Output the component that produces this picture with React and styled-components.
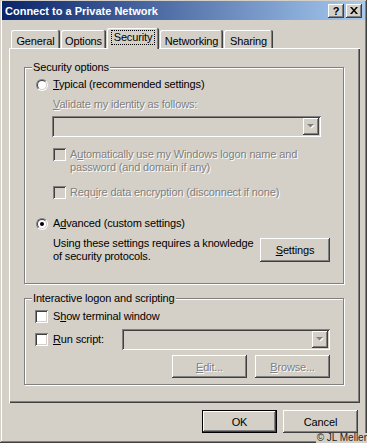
import React from 'react';
import styled, { createGlobalStyle, css } from 'styled-components';

const FACE = '#d4d0c8';
const SHADOW = '#808080';
const DARK = '#404040';
const HILITE = '#ffffff';

const GlobalStyle = createGlobalStyle`
  html, body {
    margin: 0;
    padding: 0;
    background: ${FACE};
  }
  body {
    font-family: "Liberation Sans", Arial, sans-serif;
    font-size: 11px;
    letter-spacing: -0.15px;
    color: #000;
  }
`;

const raised = css`
  box-shadow: inset -1px -1px ${DARK}, inset 1px 1px ${HILITE},
    inset -2px -2px ${SHADOW}, inset 2px 2px ${FACE};
`;

const sunken = css`
  box-shadow: inset 1px 1px ${SHADOW}, inset -1px -1px ${HILITE},
    inset 2px 2px ${DARK}, inset -2px -2px ${FACE};
`;

const disabledText = css`
  color: ${SHADOW};
  text-shadow: 1px 1px 0 ${HILITE};
`;

const Window = styled.div`
  position: relative;
  width: 367px;
  height: 443px;
  box-sizing: border-box;
  padding: 1px 2px 2px 2px;
  background: ${FACE};
  box-shadow: inset -1px -1px ${DARK}, inset 1px 1px ${FACE},
    inset -2px -2px ${SHADOW}, inset 2px 2px ${HILITE};
  display: flex;
  flex-direction: column;
  overflow: hidden;
`;

const TitleBar = styled.div`
  height: 19px;
  display: flex;
  align-items: center;
  padding: 0 3px 0 3px;
  background: linear-gradient(to right, #0a246a, #a6caf0);
`;

const Title = styled.div`
  flex: 1;
  color: #fff;
  font-weight: bold;
  font-size: 11px;
  letter-spacing: 0;
  white-space: nowrap;
`;

const CaptionButton = styled.div`
  width: 16px;
  height: 14px;
  margin-left: ${(p) => p.$gap || 0}px;
  box-sizing: border-box;
  background: ${FACE};
  ${raised};
  display: flex;
  align-items: center;
  justify-content: center;
  font-weight: bold;
  font-size: 11px;
  line-height: 14px;
`;

const Body = styled.div`
  flex: 1;
  display: flex;
  flex-direction: column;
  padding: 8px 5px 0 7px;
`;

const TabRow = styled.div`
  position: relative;
  z-index: 1;
  height: 21px;
  display: flex;
  align-items: flex-start;
  gap: 1px;
  padding-left: 2px;
`;

const Tab = styled.div`
  width: ${(p) => p.$w}px;
  height: ${(p) => (p.$active ? 21 : 18)}px;
  margin-top: ${(p) => (p.$active ? 0 : 2)}px;
  box-sizing: border-box;
  background: ${FACE};
  border-radius: 2px 2px 0 0;
  box-shadow: inset -1px 0 ${DARK}, inset 1px 1px ${HILITE},
    inset -2px 0 ${SHADOW};
  display: flex;
  justify-content: center;
  align-items: flex-start;
  padding-top: ${(p) => (p.$active ? 2 : 4)}px;
`;

const TabLabel = styled.span`
  line-height: 13px;
  padding: 0 2px;
  border: 1px dotted ${(p) => (p.$focus ? '#000' : 'transparent')};
`;

const Panel = styled.div`
  height: 355px;
  margin-top: -1px;
  box-sizing: border-box;
  padding: 13px 16px 0 15px;
  box-shadow: inset 1px 1px ${HILITE}, inset -1px -1px ${DARK},
    inset -2px -2px ${SHADOW};
  display: flex;
  flex-direction: column;
`;

const Group = styled.fieldset`
  margin: ${(p) => p.$mt || 0}px 0 0 0;
  padding: 0 13px ${(p) => p.$pb}px 10px;
  min-width: 0;
  border: 1px solid ${SHADOW};
  box-shadow: inset 1px 1px ${HILITE}, 1px 1px 0 ${HILITE};
  display: flex;
  flex-direction: column;
`;

const Legend = styled.legend`
  margin-left: -3px;
  padding: 0 1px;
  line-height: 13px;
  background: ${FACE};
`;

const Row = styled.div`
  display: flex;
  align-items: ${(p) => p.$align || 'center'};
  gap: ${(p) => p.$gap ?? 5}px;
  margin-top: ${(p) => p.$mt || 0}px;
  padding-left: ${(p) => p.$indent || 0}px;
`;

const Text = styled.span`
  line-height: 13px;
  white-space: nowrap;
  ${(p) => p.$disabled && disabledText};
`;

const TextBlock = styled.div`
  line-height: 13px;
  ${(p) => p.$disabled && disabledText};
`;

const RadioOuter = styled.span`
  flex: none;
  width: 12px;
  height: 12px;
  margin-left: 1px;
  box-sizing: border-box;
  border-radius: 50%;
  border: 1px solid;
  border-color: ${SHADOW} ${HILITE} ${HILITE} ${SHADOW};
  display: flex;
`;

const RadioInner = styled.span`
  flex: 1;
  border-radius: 50%;
  border: 1px solid;
  border-color: ${DARK} ${FACE} ${FACE} ${DARK};
  background: #fff;
  display: flex;
  align-items: center;
  justify-content: center;
`;

const RadioDot = styled.span`
  width: 4px;
  height: 4px;
  border-radius: 50%;
  background: #000;
`;

const Radio = ({ checked }) => (
  <RadioOuter>
    <RadioInner>{checked && <RadioDot />}</RadioInner>
  </RadioOuter>
);

const Checkbox = styled.span`
  flex: none;
  width: 13px;
  height: 13px;
  box-sizing: border-box;
  ${sunken};
  background: ${(p) => (p.$disabled ? FACE : '#fff')};
`;

const Combo = styled.div`
  flex: none;
  width: ${(p) => p.$w}px;
  height: 21px;
  margin-left: ${(p) => p.$ml || 0}px;
  box-sizing: border-box;
  padding: 2px;
  ${sunken};
  background: ${FACE};
  display: flex;
  justify-content: flex-end;
`;

const ComboButton = styled.div`
  width: 16px;
  box-sizing: border-box;
  background: ${FACE};
  ${raised};
  display: flex;
  align-items: center;
  justify-content: center;
`;

const Button = styled.button`
  flex: none;
  width: ${(p) => p.$w}px;
  height: ${(p) => p.$h || 23}px;
  margin-top: ${(p) => p.$mt || 0}px;
  box-sizing: border-box;
  padding: 0;
  border: none;
  background: ${FACE};
  font: inherit;
  letter-spacing: inherit;
  color: #000;
  ${raised};
  ${(p) => p.disabled && disabledText};
  ${(p) =>
    p.$default &&
    css`
      box-shadow: inset 0 0 0 1px #000, inset -2px -2px ${DARK},
        inset 2px 2px ${HILITE}, inset -3px -3px ${SHADOW};
    `}
`;

const ButtonRow = styled.div`
  display: flex;
  justify-content: flex-end;
  gap: ${(p) => p.$gap}px;
  margin-top: ${(p) => p.$mt || 0}px;
  padding-right: ${(p) => p.$pr || 0}px;
`;

const Watermark = styled.div`
  position: absolute;
  right: 0;
  bottom: 0;
  padding: 0 0 0 1px;
  background: ${FACE};
  color: #222;
  font-size: 10px;
  line-height: 10px;
  letter-spacing: 0;
`;

const Arrow = () => (
  <svg width="8" height="5" viewBox="0 0 8 5">
    <polygon points="1,1 8,1 4.5,4.5" fill={HILITE} />
    <polygon points="0,0 7,0 3.5,3.5" fill={SHADOW} />
  </svg>
);

const CloseGlyph = () => (
  <svg width="8" height="7" viewBox="0 0 8 7">
    <path d="M0 0h2l2 2.5L6 0h2L5 3.5 8 7H6L4 4.5 2 7H0l3-3.5z" fill="#000" />
  </svg>
);

const tabs = [
  { label: 'General', w: 49 },
  { label: 'Options', w: 45 },
  { label: 'Security', w: 52, active: true },
  { label: 'Networking', w: 63 },
  { label: 'Sharing', w: 49 },
];

const App = () => (
  <>
    <GlobalStyle />
    <Window>
      <TitleBar>
        <Title>Connect to a Private Network</Title>
        <CaptionButton>?</CaptionButton>
        <CaptionButton $gap={2}>
          <CloseGlyph />
        </CaptionButton>
      </TitleBar>
      <Body>
        <TabRow>
          {tabs.map((t) => (
            <Tab key={t.label} $w={t.w} $active={t.active}>
              <TabLabel $focus={t.active}>{t.label}</TabLabel>
            </Tab>
          ))}
        </TabRow>
        <Panel>
          <Group $pb={20}>
            <Legend>Security options</Legend>
            <Row $mt={4}>
              <Radio />
              <Text>
                <u>T</u>ypical (recommended settings)
              </Text>
            </Row>
            <Row $mt={7} $indent={18}>
              <Text $disabled>
                <u>V</u>alidate my identity as follows:
              </Text>
            </Row>
            <Row $mt={5} $indent={18}>
              <Combo $w={269} $ml={-1}>
                <ComboButton>
                  <Arrow />
                </ComboButton>
              </Combo>
            </Row>
            <Row $mt={11} $indent={18} $align="flex-start" $gap={4}>
              <Checkbox $disabled />
              <TextBlock $disabled>
                A<u>u</u>tomatically use my Windows logon name and
                <br />
                password (and domain if any)
              </TextBlock>
            </Row>
            <Row $mt={12} $indent={18} $gap={4}>
              <Checkbox $disabled />
              <Text $disabled>
                Requ<u>i</u>re data encryption (disconnect if none)
              </Text>
            </Row>
            <Row $mt={18}>
              <Radio checked />
              <Text>
                A<u>d</u>vanced (custom settings)
              </Text>
            </Row>
            <Row $mt={7} $indent={18} $align="flex-start" $gap={0}>
              <TextBlock>
                Using these settings requires a knowledge
                <br />
                of security protocols.
              </TextBlock>
              <Button $w={70} $h={24} $mt={1} style={{ marginLeft: 'auto' }}>
                <u>S</u>ettings
              </Button>
            </Row>
          </Group>
          <Group $mt={8} $pb={6}>
            <Legend>Interactive logon and scripting</Legend>
            <Row $mt={5}>
              <Checkbox />
              <Text>
                S<u>h</u>ow terminal window
              </Text>
            </Row>
            <Row $mt={6} $gap={0}>
              <Checkbox />
              <Text style={{ marginLeft: 5 }}>
                <u>R</u>un script:
              </Text>
              <Combo $w={208} style={{ marginLeft: 'auto' }}>
                <ComboButton>
                  <Arrow />
                </ComboButton>
              </Combo>
            </Row>
            <ButtonRow $gap={8} $mt={5}>
              <Button $w={75} disabled>
                <u>E</u>dit...
              </Button>
              <Button $w={75} disabled>
                <u>B</u>rowse...
              </Button>
            </ButtonRow>
          </Group>
        </Panel>
        <ButtonRow $gap={6} $mt={7} $pr={2}>
          <Button $w={75} $default>
            OK
          </Button>
          <Button $w={75}>Cancel</Button>
        </ButtonRow>
      </Body>
      <Watermark>© JL Meller</Watermark>
    </Window>
  </>
);

export default App;
